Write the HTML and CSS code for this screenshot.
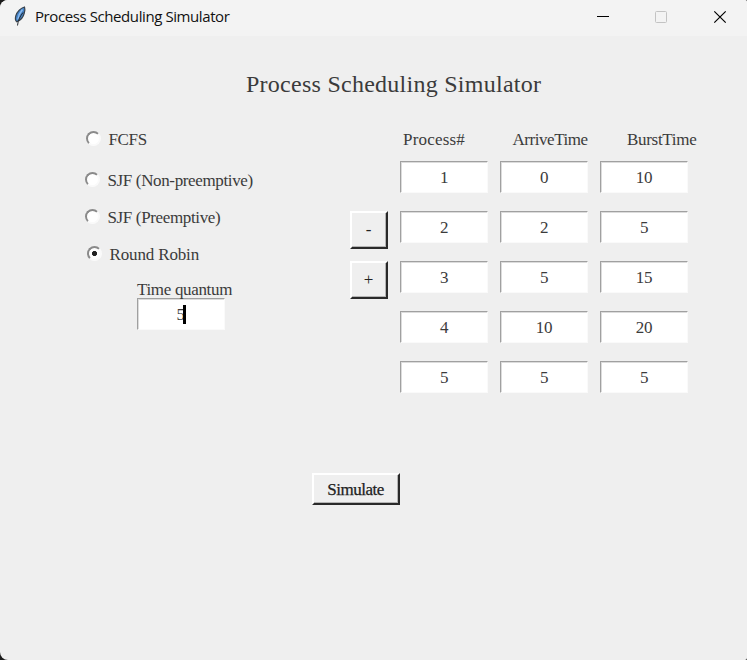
FILE: index.html
```html
<!DOCTYPE html>
<html lang="en">
<head>
<meta charset="utf-8">
<title>Process Scheduling Simulator</title>
<link rel="stylesheet" href="styles.css">
</head>
<body>
<div class="window">
  <header class="titlebar">
    <svg class="feather" width="14" height="21" viewBox="0 0 14 21">
      <path d="M11.500 1C8 1.800 4 5.500 2.800 9.800c-.7 2.600-.5 4.700.9 5.900 3.600-1.200 6.600-4.500 7.600-8.700.6-2.300.7-4.500.2-6z" fill="#4382c6" stroke="#39424c" stroke-width="1.200"/>
      <path d="M9.500 3.500C6.500 7 5.300 10.500 4.800 13.500" fill="none" stroke="#8dbcf0" stroke-width="1.500"/>
      <path d="M10 6.500C7.500 10 5 13.500 4.500 19.500" fill="none" stroke="#252a30" stroke-width="1"/>
    </svg>
    <span class="caption">Process Scheduling Simulator</span>
    <svg class="controls" width="132" height="16" viewBox="0 0 132 16">
      <path d="M0 7.500h12" stroke="#000"/>
      <rect x="58.500" y="2.500" width="11" height="11" rx="1" fill="none" stroke="#c3c3c3"/>
      <path d="M117.300 2.300l11.400 11.400M128.700 2.300l-11.400 11.400" stroke="#000" stroke-width="1.200"/>
    </svg>
  </header>
  <main class="content">
    <h1 class="heading">Process Scheduling Simulator</h1>
    <div class="panels">
      <section class="algorithms">
        <div class="option fcfs"><i class="radio"></i><span>FCFS</span></div>
        <div class="option sjf"><i class="radio"></i><span>SJF (Non-preemptive)</span></div>
        <div class="option sjf-preemptive"><i class="radio"></i><span>SJF (Preemptive)</span></div>
        <div class="option round-robin"><i class="radio checked"></i><span>Round Robin</span></div>
        <div class="quantum">
          <div class="quantum-label">Time quantum</div>
          <div class="field"><span>5</span><i class="caret"></i></div>
        </div>
      </section>
      <section class="row-buttons">
        <div class="button square">-</div>
        <div class="button square">+</div>
      </section>
      <section class="processes">
        <div class="head head-process">Process#</div><div class="head head-arrive">ArriveTime</div><div class="head head-burst">BurstTime</div>
        <div class="field">1</div><div class="field">0</div><div class="field">10</div>
        <div class="field">2</div><div class="field">2</div><div class="field">5</div>
        <div class="field">3</div><div class="field">5</div><div class="field">15</div>
        <div class="field">4</div><div class="field">10</div><div class="field">20</div>
        <div class="field">5</div><div class="field">5</div><div class="field">5</div>
      </section>
    </div>
    <div class="button simulate"><span>Simulate</span></div>
  </main>
</div>
</body>
</html>
```
FILE: styles.css
```css
* { box-sizing: border-box; }
body { margin: 0; background: #1b1b1b; }
.window {
  width: 747px;
  height: 660px;
  background: #efefef;
  border-radius: 8px 2px 2px 8px;
  overflow: hidden;
  font: 17px/20px "Liberation Serif", serif;
  color: #3b3b3b;
}
.titlebar {
  display: flex;
  align-items: center;
  height: 36px;
  padding: 0 18px 3px 13px;
  background: #f3f3f3;
}
.feather { margin-right: 8px; }
.caption {
  font: 15px/20px "Open Sans", sans-serif;
  letter-spacing: -0.41px;
  color: #111;
  white-space: nowrap;
  margin-top: -2px;
}
.controls { margin-left: auto; }
.content { padding-top: 33px; }
.heading {
  margin: 0 0 31px 246px;
  font-size: 24px;
  line-height: 30px;
  font-weight: normal;
  letter-spacing: 0.26px;
  white-space: nowrap;
}
.panels {
  display: grid;
  grid-template-columns: 265px 38px 288px;
  padding-left: 85px;
  height: 262px;
}
.option {
  display: flex;
  height: 20px;
  letter-spacing: -0.36px;
  white-space: nowrap;
}
.radio {
  width: 15px;
  height: 15px;
  margin: 1px 7.5px 0 0;
  border-radius: 50%;
  border: 2px solid;
  border-color: #8a8a8a #fafafa #fafafa #8a8a8a;
  background: #fff;
}
.checked { background: radial-gradient(circle, #222 2.2px, #fff 2.9px); }
.fcfs { margin-left: 1px; }
.sjf { margin-top: 21px; }
.sjf-preemptive { margin-top: 17px; }
.round-robin { margin: 17px 0 0 2px; letter-spacing: -0.15px; }
.quantum { margin: 15px 0 0 52px; }
.quantum-label {
  height: 18px;
  letter-spacing: -0.33px;
  white-space: nowrap;
}
.field {
  display: flex;
  align-items: center;
  justify-content: center;
  width: 88px;
  height: 32px;
  padding-top: 1px;
  letter-spacing: -0.3px;
  border: 1px solid;
  border-color: #a0a0a0 #fafafa #fafafa #a0a0a0;
  box-shadow: inset 1px 1px #dcdcdc;
  background: #fff;
}
.caret { width: 3px; height: 19px; background: #000; margin-left: -2px; }
.row-buttons { padding-top: 81px; }
.button {
  display: flex;
  align-items: center;
  justify-content: center;
  border: 2px solid;
  border-color: #fff #2a2a2a #2a2a2a #fff;
  box-shadow: inset -1px -1px #b5b5b5;
  background: #efefef;
  color: #222;
}
.square { width: 38px; height: 38px; margin-bottom: 12px; padding-right: 1px; }
.processes {
  display: grid;
  grid-template-columns: repeat(3, 88px);
  grid-template-rows: 13px repeat(5, 32px);
  column-gap: 12px;
  row-gap: 18px;
  margin-left: 12px;
}
.head { height: 20px; white-space: nowrap; }
.head-process { margin-left: 3px; letter-spacing: 0.2px; }
.head-arrive { margin-left: 12.5px; letter-spacing: -0.45px; }
.head-burst { margin-left: 27px; letter-spacing: -0.3px; }
.simulate {
  width: 88px;
  height: 32px;
  margin: 81px 0 0 312px;
  padding: 2px 1px 0 0;
  letter-spacing: -0.5px;
  -webkit-text-stroke: 0.25px #222;
}
```
